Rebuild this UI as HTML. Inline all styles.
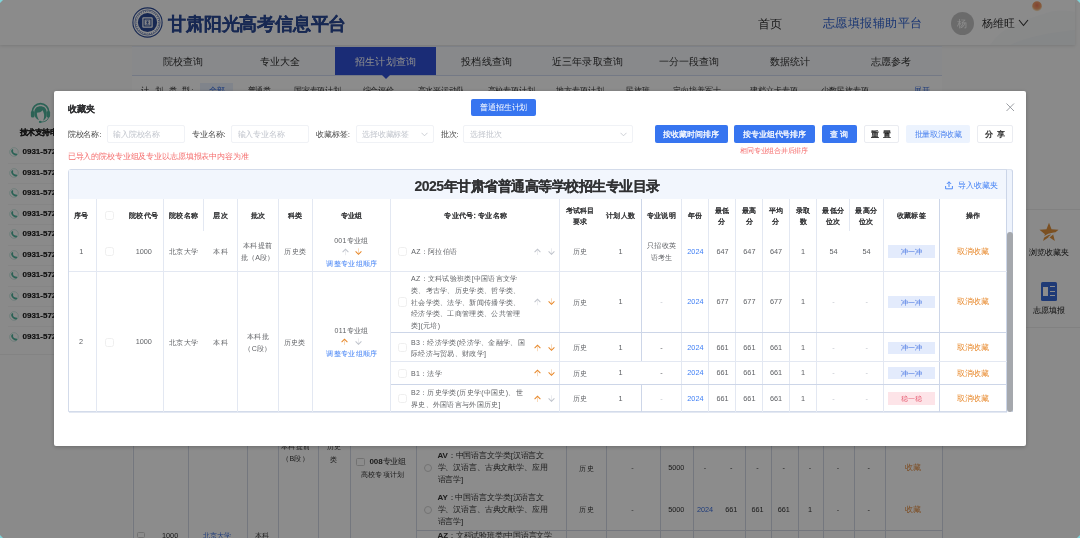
<!DOCTYPE html>
<html><head><meta charset="utf-8"><style>
html,body{margin:0;padding:0}
body{width:1080px;height:538px;overflow:hidden;position:relative;background:#fbfbfb;font-family:"Liberation Sans",sans-serif}
.a{position:absolute;white-space:nowrap}
</style></head><body>
<div id="root" style="position:absolute;left:0;top:0;width:1080px;height:538px;will-change:transform">
<div id="bg">
<div class="a" style="left:0.00px;top:0.00px;width:1075.00px;height:45.00px;background:#fdfdfe;box-shadow:0 1px 3px rgba(0,0,0,.12);"></div>
<svg class="a" style="left:990px;top:0" width="85" height="45" viewBox="0 0 85 45"><path d="M15 30 C30 22 45 16 60 12 C70 10 78 11 85 12 L85 45 L0 45 C5 38 10 33 15 30Z" fill="#eef1f4" opacity="0.35"/><path d="M20 45 C35 38 55 33 85 30 L85 45Z" fill="#e9edf1" opacity="0.3"/><defs><radialGradient id="sun" cx="0.5" cy="0.4" r="0.6"><stop offset="0" stop-color="#ee7a5a"/><stop offset="0.65" stop-color="#f3a46e"/><stop offset="1" stop-color="#f8d9a0" stop-opacity="0.5"/></radialGradient></defs><circle cx="47" cy="6.3" r="5" fill="url(#sun)"/></svg>
<svg class="a" style="left:132.3px;top:7.3px" width="31" height="31" viewBox="0 0 31 31"><circle cx="15.5" cy="15.5" r="14.6" fill="#fff" stroke="#2b4a96" stroke-width="1.1"/><circle cx="15.5" cy="15.5" r="12.6" fill="none" stroke="#2b4a96" stroke-width="0.6"/><circle cx="15.5" cy="15.5" r="11.3" fill="none" stroke="#2b4a96" stroke-width="1.1" stroke-dasharray="0.9 1.3" opacity="0.8"/><circle cx="15.5" cy="15.5" r="9.6" fill="#2b4a96"/><rect x="10.3" y="10.3" width="10.4" height="10.4" rx="1.2" fill="#fff"/><rect x="11.5" y="11.5" width="8" height="8" fill="#2b4a96"/><rect x="12.6" y="12.6" width="5.8" height="5.8" fill="#fff"/><path d="M13.6 13.9 H17.4 M15.5 13.9 V17.2 M13.6 17.2 H17.4 M14.2 15.5 H16.8" stroke="#2b4a96" stroke-width="0.7"/></svg>
<div class="a" style="top:15.03px;font-size:18px;line-height:18px;color:#2b4a96;letter-spacing:-0.200px;font-weight:700;-webkit-text-stroke:0.15px #2b4a96;left:168.30px;">甘肃阳光高考信息平台</div>
<div class="a" style="top:17.55px;font-size:12px;line-height:12px;color:#333;letter-spacing:-0.200px;left:758.00px;">首页</div>
<div class="a" style="top:17.25px;font-size:12px;line-height:12px;color:#2f62d0;letter-spacing:0.450px;left:823.00px;">志愿填报辅助平台</div>
<div class="a" style="left:950.5px;top:11.5px;width:23px;height:23px;border-radius:50%;background:#c4c4c4;color:#fff;font-size:10px;line-height:23px;text-align:center">杨</div>
<div class="a" style="top:17.98px;font-size:11px;line-height:11px;color:#333;letter-spacing:-0.100px;left:982.00px;">杨维旺</div>
<svg class="a" style="left:1018px;top:18.5px" width="11" height="8" viewBox="0 0 11 8"><path d="M1 1 L5.5 6.5 L10 1" fill="none" stroke="#333" stroke-width="1.1"/></svg>
<div class="a" style="left:132.00px;top:46.00px;width:810.00px;height:492.00px;background:#ffffff;"></div>
<div class="a" style="left:132.00px;top:46.00px;width:810.00px;height:29.00px;background:#f7f9fd;border-top:1px solid #e3e9f5;box-sizing:border-box;"></div>
<div class="a" style="left:132.00px;top:75.00px;width:810.00px;height:0.80px;background:#d3ddf2;"></div>
<div class="a" style="left:335.00px;top:47.00px;width:101.00px;height:28.00px;background:#3050d8;"></div>
<div class="a" style="left:381.5px;top:75px;width:0;height:0;border-left:4px solid transparent;border-right:4px solid transparent;border-top:4px solid #3050d8"></div>
<div class="a" style="top:57.45px;font-size:10px;line-height:10px;color:#333;letter-spacing:0.100px;left:122.95px;width:120px;text-align:center;">院校查询</div>
<div class="a" style="top:57.45px;font-size:10px;line-height:10px;color:#333;letter-spacing:0.100px;left:220.05px;width:120px;text-align:center;">专业大全</div>
<div class="a" style="top:57.45px;font-size:10px;line-height:10px;color:#fff;letter-spacing:0.100px;left:325.55px;width:120px;text-align:center;">招生计划查询</div>
<div class="a" style="top:57.45px;font-size:10px;line-height:10px;color:#333;letter-spacing:0.100px;left:426.65px;width:120px;text-align:center;">投档线查询</div>
<div class="a" style="top:57.45px;font-size:10px;line-height:10px;color:#333;letter-spacing:0.100px;left:527.55px;width:120px;text-align:center;">近三年录取查询</div>
<div class="a" style="top:57.45px;font-size:10px;line-height:10px;color:#333;letter-spacing:0.100px;left:629.05px;width:120px;text-align:center;">一分一段查询</div>
<div class="a" style="top:57.45px;font-size:10px;line-height:10px;color:#333;letter-spacing:0.100px;left:730.05px;width:120px;text-align:center;">数据统计</div>
<div class="a" style="top:57.45px;font-size:10px;line-height:10px;color:#333;letter-spacing:0.100px;left:831.25px;width:120px;text-align:center;">志愿参考</div>
<div class="a" style="left:200.00px;top:82.50px;width:33.00px;height:17.50px;background:#e9f0fd;"></div>
<div class="a" style="top:87.09px;font-size:8px;line-height:8px;color:#333;letter-spacing:-0.100px;left:141.40px;letter-spacing:5.6px;">计划类型</div>
<div class="a" style="top:86.69px;font-size:7.9px;line-height:7.9px;color:#333;left:191.20px;">:</div>
<div class="a" style="top:87.09px;font-size:8px;line-height:8px;color:#3b6fe0;letter-spacing:-0.100px;left:208.75px;">全部</div>
<div class="a" style="top:87.09px;font-size:8px;line-height:8px;color:#333;letter-spacing:-0.100px;left:247.50px;">普通类</div>
<div class="a" style="top:87.09px;font-size:8px;line-height:8px;color:#333;letter-spacing:-0.100px;left:293.75px;">国家专项计划</div>
<div class="a" style="top:87.09px;font-size:8px;line-height:8px;color:#333;letter-spacing:-0.100px;left:362.50px;">综合评价</div>
<div class="a" style="top:87.09px;font-size:8px;line-height:8px;color:#333;letter-spacing:-0.100px;left:417.50px;">高水平运动队</div>
<div class="a" style="top:87.09px;font-size:8px;line-height:8px;color:#333;letter-spacing:-0.100px;left:487.50px;">高校专项计划</div>
<div class="a" style="top:87.09px;font-size:8px;line-height:8px;color:#333;letter-spacing:-0.100px;left:556.25px;">地方专项计划</div>
<div class="a" style="top:87.09px;font-size:8px;line-height:8px;color:#333;letter-spacing:-0.100px;left:626.25px;">民族班</div>
<div class="a" style="top:87.09px;font-size:8px;line-height:8px;color:#333;letter-spacing:-0.100px;left:673.00px;">定向培养军士</div>
<div class="a" style="top:87.09px;font-size:8px;line-height:8px;color:#333;letter-spacing:-0.100px;left:750.00px;">建档立卡专项</div>
<div class="a" style="top:87.09px;font-size:8px;line-height:8px;color:#333;letter-spacing:-0.100px;left:821.25px;">少数民族专项</div>
<div class="a" style="top:87.09px;font-size:8px;line-height:8px;color:#3b6fe0;letter-spacing:-0.100px;left:913.75px;">展开</div>
<div class="a" style="left:0.00px;top:93.30px;width:132.00px;height:444.70px;background:#fcfcfc;"></div>
<svg class="a" style="left:30px;top:102px" width="21" height="21" viewBox="0 0 21 21"><path d="M2.3 10 A8.2 8.2 0 0 1 18.7 10" fill="none" stroke="#4fb39c" stroke-width="1.9"/><path d="M3.6 9.6 A6.9 6.9 0 0 1 17.4 9.6" fill="none" stroke="#fcfcfc" stroke-width="0.45" opacity="0.8"/><path d="M4.3 10.5 C4.3 6.2 7 4.2 10.5 4.2 C14 4.2 16.7 6.2 16.7 10.5 L16.5 14 C16 16.5 14.5 18 13 18.8 C13.8 17 14.3 15 14.1 12.5 C13.5 10.5 13.2 9.5 12.8 8.3 C11.5 10 9 10.8 6.9 10.8 C6.8 13.5 7.5 16 9 18 C6.5 17.2 4.8 15 4.4 13Z" fill="#4fb39c"/><rect x="0.9" y="9" width="3.6" height="6.6" rx="1.6" fill="#4fb39c"/><rect x="16.5" y="9" width="3.6" height="6.6" rx="1.6" fill="#4fb39c"/><path d="M18.6 15 C18 18.5 15 20 10.5 20" fill="none" stroke="#4fb39c" stroke-width="0.9"/><ellipse cx="10.2" cy="19.9" rx="1.4" ry="1.1" fill="#4fb39c"/></svg>
<div class="a" style="top:129.33px;font-size:8px;line-height:8px;color:#222;letter-spacing:-0.400px;font-weight:700;-webkit-text-stroke:0.15px #222;left:19.50px;">技术支持电话</div>
<svg class="a" style="left:9px;top:147.30px" width="10" height="10" viewBox="0 0 10 10"><circle cx="5" cy="5" r="4.3" fill="none" stroke="#4fb39c" stroke-width="0.5" opacity="0.55"/><path d="M3.4 1.9 C2.1 2.6 1.9 4.2 2.6 5.6 C3.3 7 4.6 8.1 6.2 8.4 C7.2 8.5 8 8 8.3 7.4 L7.1 6.2 C6.6 6.6 5.8 6.6 5.2 6.1 C4.4 5.5 4 4.7 4 3.9 C4 3.5 4.2 3.2 4.5 3Z" fill="#4fb39c"/></svg>
<div class="a" style="top:148.34px;font-size:8.0px;line-height:8.0px;color:#1a1a1a;font-weight:700;-webkit-text-stroke:0.15px #1a1a1a;left:22.50px;">0931-5728888</div>
<div class="a" style="left:8.00px;top:162.70px;width:124.00px;height:0.40px;background:#f3f3f3;"></div>
<svg class="a" style="left:9px;top:167.77px" width="10" height="10" viewBox="0 0 10 10"><circle cx="5" cy="5" r="4.3" fill="none" stroke="#4fb39c" stroke-width="0.5" opacity="0.55"/><path d="M3.4 1.9 C2.1 2.6 1.9 4.2 2.6 5.6 C3.3 7 4.6 8.1 6.2 8.4 C7.2 8.5 8 8 8.3 7.4 L7.1 6.2 C6.6 6.6 5.8 6.6 5.2 6.1 C4.4 5.5 4 4.7 4 3.9 C4 3.5 4.2 3.2 4.5 3Z" fill="#4fb39c"/></svg>
<div class="a" style="top:168.81px;font-size:8.0px;line-height:8.0px;color:#1a1a1a;font-weight:700;-webkit-text-stroke:0.15px #1a1a1a;left:22.50px;">0931-5728888</div>
<div class="a" style="left:8.00px;top:183.17px;width:124.00px;height:0.40px;background:#f3f3f3;"></div>
<svg class="a" style="left:9px;top:188.24px" width="10" height="10" viewBox="0 0 10 10"><circle cx="5" cy="5" r="4.3" fill="none" stroke="#4fb39c" stroke-width="0.5" opacity="0.55"/><path d="M3.4 1.9 C2.1 2.6 1.9 4.2 2.6 5.6 C3.3 7 4.6 8.1 6.2 8.4 C7.2 8.5 8 8 8.3 7.4 L7.1 6.2 C6.6 6.6 5.8 6.6 5.2 6.1 C4.4 5.5 4 4.7 4 3.9 C4 3.5 4.2 3.2 4.5 3Z" fill="#4fb39c"/></svg>
<div class="a" style="top:189.28px;font-size:8.0px;line-height:8.0px;color:#1a1a1a;font-weight:700;-webkit-text-stroke:0.15px #1a1a1a;left:22.50px;">0931-5728888</div>
<div class="a" style="left:8.00px;top:203.64px;width:124.00px;height:0.40px;background:#f3f3f3;"></div>
<svg class="a" style="left:9px;top:208.71px" width="10" height="10" viewBox="0 0 10 10"><circle cx="5" cy="5" r="4.3" fill="none" stroke="#4fb39c" stroke-width="0.5" opacity="0.55"/><path d="M3.4 1.9 C2.1 2.6 1.9 4.2 2.6 5.6 C3.3 7 4.6 8.1 6.2 8.4 C7.2 8.5 8 8 8.3 7.4 L7.1 6.2 C6.6 6.6 5.8 6.6 5.2 6.1 C4.4 5.5 4 4.7 4 3.9 C4 3.5 4.2 3.2 4.5 3Z" fill="#4fb39c"/></svg>
<div class="a" style="top:209.75px;font-size:8.0px;line-height:8.0px;color:#1a1a1a;font-weight:700;-webkit-text-stroke:0.15px #1a1a1a;left:22.50px;">0931-5728888</div>
<div class="a" style="left:8.00px;top:224.11px;width:124.00px;height:0.40px;background:#f3f3f3;"></div>
<svg class="a" style="left:9px;top:229.18px" width="10" height="10" viewBox="0 0 10 10"><circle cx="5" cy="5" r="4.3" fill="none" stroke="#4fb39c" stroke-width="0.5" opacity="0.55"/><path d="M3.4 1.9 C2.1 2.6 1.9 4.2 2.6 5.6 C3.3 7 4.6 8.1 6.2 8.4 C7.2 8.5 8 8 8.3 7.4 L7.1 6.2 C6.6 6.6 5.8 6.6 5.2 6.1 C4.4 5.5 4 4.7 4 3.9 C4 3.5 4.2 3.2 4.5 3Z" fill="#4fb39c"/></svg>
<div class="a" style="top:230.22px;font-size:8.0px;line-height:8.0px;color:#1a1a1a;font-weight:700;-webkit-text-stroke:0.15px #1a1a1a;left:22.50px;">0931-5728888</div>
<div class="a" style="left:8.00px;top:244.58px;width:124.00px;height:0.40px;background:#f3f3f3;"></div>
<svg class="a" style="left:9px;top:249.65px" width="10" height="10" viewBox="0 0 10 10"><circle cx="5" cy="5" r="4.3" fill="none" stroke="#4fb39c" stroke-width="0.5" opacity="0.55"/><path d="M3.4 1.9 C2.1 2.6 1.9 4.2 2.6 5.6 C3.3 7 4.6 8.1 6.2 8.4 C7.2 8.5 8 8 8.3 7.4 L7.1 6.2 C6.6 6.6 5.8 6.6 5.2 6.1 C4.4 5.5 4 4.7 4 3.9 C4 3.5 4.2 3.2 4.5 3Z" fill="#4fb39c"/></svg>
<div class="a" style="top:250.69px;font-size:8.0px;line-height:8.0px;color:#1a1a1a;font-weight:700;-webkit-text-stroke:0.15px #1a1a1a;left:22.50px;">0931-5728888</div>
<div class="a" style="left:8.00px;top:265.05px;width:124.00px;height:0.40px;background:#f3f3f3;"></div>
<svg class="a" style="left:9px;top:270.12px" width="10" height="10" viewBox="0 0 10 10"><circle cx="5" cy="5" r="4.3" fill="none" stroke="#4fb39c" stroke-width="0.5" opacity="0.55"/><path d="M3.4 1.9 C2.1 2.6 1.9 4.2 2.6 5.6 C3.3 7 4.6 8.1 6.2 8.4 C7.2 8.5 8 8 8.3 7.4 L7.1 6.2 C6.6 6.6 5.8 6.6 5.2 6.1 C4.4 5.5 4 4.7 4 3.9 C4 3.5 4.2 3.2 4.5 3Z" fill="#4fb39c"/></svg>
<div class="a" style="top:271.16px;font-size:8.0px;line-height:8.0px;color:#1a1a1a;font-weight:700;-webkit-text-stroke:0.15px #1a1a1a;left:22.50px;">0931-5728888</div>
<div class="a" style="left:8.00px;top:285.52px;width:124.00px;height:0.40px;background:#f3f3f3;"></div>
<svg class="a" style="left:9px;top:290.59px" width="10" height="10" viewBox="0 0 10 10"><circle cx="5" cy="5" r="4.3" fill="none" stroke="#4fb39c" stroke-width="0.5" opacity="0.55"/><path d="M3.4 1.9 C2.1 2.6 1.9 4.2 2.6 5.6 C3.3 7 4.6 8.1 6.2 8.4 C7.2 8.5 8 8 8.3 7.4 L7.1 6.2 C6.6 6.6 5.8 6.6 5.2 6.1 C4.4 5.5 4 4.7 4 3.9 C4 3.5 4.2 3.2 4.5 3Z" fill="#4fb39c"/></svg>
<div class="a" style="top:291.63px;font-size:8.0px;line-height:8.0px;color:#1a1a1a;font-weight:700;-webkit-text-stroke:0.15px #1a1a1a;left:22.50px;">0931-5728888</div>
<div class="a" style="left:8.00px;top:305.99px;width:124.00px;height:0.40px;background:#f3f3f3;"></div>
<svg class="a" style="left:9px;top:311.06px" width="10" height="10" viewBox="0 0 10 10"><circle cx="5" cy="5" r="4.3" fill="none" stroke="#4fb39c" stroke-width="0.5" opacity="0.55"/><path d="M3.4 1.9 C2.1 2.6 1.9 4.2 2.6 5.6 C3.3 7 4.6 8.1 6.2 8.4 C7.2 8.5 8 8 8.3 7.4 L7.1 6.2 C6.6 6.6 5.8 6.6 5.2 6.1 C4.4 5.5 4 4.7 4 3.9 C4 3.5 4.2 3.2 4.5 3Z" fill="#4fb39c"/></svg>
<div class="a" style="top:312.10px;font-size:8.0px;line-height:8.0px;color:#1a1a1a;font-weight:700;-webkit-text-stroke:0.15px #1a1a1a;left:22.50px;">0931-5728888</div>
<div class="a" style="left:8.00px;top:326.46px;width:124.00px;height:0.40px;background:#f3f3f3;"></div>
<svg class="a" style="left:9px;top:331.53px" width="10" height="10" viewBox="0 0 10 10"><circle cx="5" cy="5" r="4.3" fill="none" stroke="#4fb39c" stroke-width="0.5" opacity="0.55"/><path d="M3.4 1.9 C2.1 2.6 1.9 4.2 2.6 5.6 C3.3 7 4.6 8.1 6.2 8.4 C7.2 8.5 8 8 8.3 7.4 L7.1 6.2 C6.6 6.6 5.8 6.6 5.2 6.1 C4.4 5.5 4 4.7 4 3.9 C4 3.5 4.2 3.2 4.5 3Z" fill="#4fb39c"/></svg>
<div class="a" style="top:332.57px;font-size:8.0px;line-height:8.0px;color:#1a1a1a;font-weight:700;-webkit-text-stroke:0.15px #1a1a1a;left:22.50px;">0931-5728888</div>
<div class="a" style="left:0.00px;top:354.30px;width:132.00px;height:0.50px;background:#eeeeee;"></div>
<div class="a" style="left:1026.00px;top:209.00px;width:54.00px;height:1.00px;background:#ececec;"></div>
<div class="a" style="left:1026.00px;top:327.00px;width:54.00px;height:1.00px;background:#ececec;"></div>
<svg class="a" style="left:1039.3px;top:221.5px" width="20" height="21" viewBox="0 0 20 21"><path d="M10.00 0.80 L12.53 7.32 L19.51 7.71 L14.09 12.13 L15.88 18.89 L10.00 15.10 L4.12 18.89 L5.91 12.13 L0.49 7.71 L7.47 7.32Z" fill="#e0923e"/><path d="M4.5 15.2 C8 12.5 11.5 11.5 14.8 11.2 L9.6 15.6" fill="none" stroke="#fcfcfc" stroke-width="1.3"/></svg>
<div class="a" style="top:248.69px;font-size:8px;line-height:8px;color:#111;letter-spacing:-0.100px;left:1019.25px;width:60px;text-align:center;">浏览收藏夹</div>
<div class="a" style="left:1041px;top:282px;width:16px;height:19px;background:#3a6ad8;border-radius:1.5px"></div>
<div class="a" style="left:1043.2px;top:287px;width:5px;height:9px;background:#fff"></div>
<div class="a" style="left:1050px;top:286px;width:4.5px;height:1.2px;background:#fff"></div>
<div class="a" style="left:1050px;top:290.5px;width:4.5px;height:1.2px;background:#fff"></div>
<div class="a" style="left:1050px;top:295px;width:4.5px;height:1.2px;background:#fff"></div>
<div class="a" style="top:307.19px;font-size:8px;line-height:8px;color:#111;letter-spacing:-0.100px;left:1019.25px;width:60px;text-align:center;">志愿填报</div>
<div class="a" style="left:133.00px;top:430.00px;width:0.80px;height:108.00px;background:#d3d9e6;"></div>
<div class="a" style="left:187.50px;top:430.00px;width:0.80px;height:108.00px;background:#d3d9e6;"></div>
<div class="a" style="left:246.50px;top:430.00px;width:0.80px;height:108.00px;background:#d3d9e6;"></div>
<div class="a" style="left:277.50px;top:430.00px;width:0.80px;height:108.00px;background:#d3d9e6;"></div>
<div class="a" style="left:318.00px;top:430.00px;width:0.80px;height:108.00px;background:#d3d9e6;"></div>
<div class="a" style="left:349.50px;top:430.00px;width:0.80px;height:108.00px;background:#d3d9e6;"></div>
<div class="a" style="left:416.25px;top:430.00px;width:0.80px;height:108.00px;background:#d3d9e6;"></div>
<div class="a" style="left:566.25px;top:430.00px;width:0.80px;height:108.00px;background:#d3d9e6;"></div>
<div class="a" style="left:606.25px;top:430.00px;width:0.80px;height:108.00px;background:#d3d9e6;"></div>
<div class="a" style="left:659.50px;top:430.00px;width:0.80px;height:108.00px;background:#d3d9e6;"></div>
<div class="a" style="left:693.00px;top:430.00px;width:0.80px;height:108.00px;background:#d3d9e6;"></div>
<div class="a" style="left:745.00px;top:430.00px;width:0.80px;height:108.00px;background:#d3d9e6;"></div>
<div class="a" style="left:771.25px;top:430.00px;width:0.80px;height:108.00px;background:#d3d9e6;"></div>
<div class="a" style="left:797.50px;top:430.00px;width:0.80px;height:108.00px;background:#d3d9e6;"></div>
<div class="a" style="left:822.50px;top:430.00px;width:0.80px;height:108.00px;background:#d3d9e6;"></div>
<div class="a" style="left:853.75px;top:430.00px;width:0.80px;height:108.00px;background:#d3d9e6;"></div>
<div class="a" style="left:885.00px;top:430.00px;width:0.80px;height:108.00px;background:#d3d9e6;"></div>
<div class="a" style="left:941.75px;top:430.00px;width:0.80px;height:108.00px;background:#d3d9e6;"></div>
<div class="a" style="left:416.25px;top:530.00px;width:525.50px;height:1.00px;background:#d3d9e6;"></div>
<div class="a" style="top:443.07px;font-size:7px;line-height:7px;color:#333;letter-spacing:0.300px;left:265.65px;width:60px;text-align:center;">本科提前</div>
<div class="a" style="top:455.07px;font-size:7px;line-height:7px;color:#333;letter-spacing:0.300px;left:265.65px;width:60px;text-align:center;">（B段）</div>
<div class="a" style="top:443.07px;font-size:7px;line-height:7px;color:#333;letter-spacing:0.300px;left:313.85px;width:40px;text-align:center;">历史</div>
<div class="a" style="top:456.07px;font-size:7px;line-height:7px;color:#333;letter-spacing:0.300px;left:313.85px;width:40px;text-align:center;">类</div>
<div class="a" style="left:356.00px;top:458.00px;width:8.50px;height:8.00px;border:1px solid #d0d0d0;border-radius:1.5px;box-sizing:border-box;background:#fff;"></div>
<div class="a" style="top:458.29px;font-size:8px;line-height:8px;color:#333;letter-spacing:-0.100px;left:369.50px;"><b>008</b>专业组</div>
<div class="a" style="top:470.57px;font-size:7px;line-height:7px;color:#333;letter-spacing:0.300px;left:342.65px;width:80px;text-align:center;">高校专项计划</div>
<div class="a" style="top:451.81px;font-size:8px;line-height:8px;color:#333;letter-spacing:-0.140px;left:437.50px;"><b>AV</b>：中国语言文学类[汉语言文</div>
<div class="a" style="top:463.81px;font-size:8px;line-height:8px;color:#333;letter-spacing:-0.140px;left:437.50px;">学、汉语言、古典文献学、应用</div>
<div class="a" style="top:476.31px;font-size:8px;line-height:8px;color:#333;letter-spacing:-0.140px;left:437.50px;">语言学]</div>
<div class="a" style="top:493.81px;font-size:8px;line-height:8px;color:#333;letter-spacing:-0.140px;left:437.50px;"><b>AY</b>：中国语言文学类[汉语言文</div>
<div class="a" style="top:505.61px;font-size:8px;line-height:8px;color:#333;letter-spacing:-0.140px;left:437.50px;">学、汉语言、古典文献学、应用</div>
<div class="a" style="top:517.61px;font-size:8px;line-height:8px;color:#333;letter-spacing:-0.140px;left:437.50px;">语言学]</div>
<div class="a" style="top:532.31px;font-size:8px;line-height:8px;color:#333;letter-spacing:-0.140px;left:437.50px;"><b>AZ</b>：文科试验班类[中国语言文学</div>
<div class="a" style="left:424.00px;top:464.00px;width:8.00px;height:8.00px;border:1px solid #d0d0d0;border-radius:50%;box-sizing:border-box;background:#fff;"></div>
<div class="a" style="left:424.00px;top:506.00px;width:8.00px;height:8.00px;border:1px solid #d0d0d0;border-radius:50%;box-sizing:border-box;background:#fff;"></div>
<div class="a" style="top:464.57px;font-size:7px;line-height:7px;color:#333;letter-spacing:0.300px;left:566.65px;width:40px;text-align:center;">历史</div>
<div class="a" style="top:506.07px;font-size:7px;line-height:7px;color:#333;letter-spacing:0.300px;left:566.65px;width:40px;text-align:center;">历史</div>
<div class="a" style="top:464.20px;font-size:7.3px;line-height:7.3px;color:#555;left:617.50px;width:30px;text-align:center;">-</div>
<div class="a" style="top:464.20px;font-size:7.3px;line-height:7.3px;color:#333;left:656.25px;width:40px;text-align:center;">5000</div>
<div class="a" style="top:505.70px;font-size:7.3px;line-height:7.3px;color:#555;left:617.50px;width:30px;text-align:center;">-</div>
<div class="a" style="top:505.70px;font-size:7.3px;line-height:7.3px;color:#333;left:656.25px;width:40px;text-align:center;">5000</div>
<div class="a" style="top:464.20px;font-size:7.3px;line-height:7.3px;color:#333;left:690.00px;width:30px;text-align:center;">-</div>
<div class="a" style="top:464.20px;font-size:7.3px;line-height:7.3px;color:#333;left:716.25px;width:30px;text-align:center;">-</div>
<div class="a" style="top:464.20px;font-size:7.3px;line-height:7.3px;color:#333;left:742.50px;width:30px;text-align:center;">-</div>
<div class="a" style="top:464.20px;font-size:7.3px;line-height:7.3px;color:#333;left:768.75px;width:30px;text-align:center;">-</div>
<div class="a" style="top:464.20px;font-size:7.3px;line-height:7.3px;color:#333;left:795.00px;width:30px;text-align:center;">-</div>
<div class="a" style="top:464.20px;font-size:7.3px;line-height:7.3px;color:#333;left:823.00px;width:30px;text-align:center;">-</div>
<div class="a" style="top:464.20px;font-size:7.3px;line-height:7.3px;color:#333;left:853.75px;width:30px;text-align:center;">-</div>
<div class="a" style="top:505.70px;font-size:7.3px;line-height:7.3px;color:#3b6fe0;left:690.00px;width:30px;text-align:center;">2024</div>
<div class="a" style="top:505.70px;font-size:7.3px;line-height:7.3px;color:#333;left:716.25px;width:30px;text-align:center;">661</div>
<div class="a" style="top:505.70px;font-size:7.3px;line-height:7.3px;color:#333;left:742.50px;width:30px;text-align:center;">661</div>
<div class="a" style="top:505.70px;font-size:7.3px;line-height:7.3px;color:#333;left:768.75px;width:30px;text-align:center;">661</div>
<div class="a" style="top:505.70px;font-size:7.3px;line-height:7.3px;color:#333;left:795.00px;width:30px;text-align:center;">1</div>
<div class="a" style="top:505.70px;font-size:7.3px;line-height:7.3px;color:#333;left:823.00px;width:30px;text-align:center;">-</div>
<div class="a" style="top:505.70px;font-size:7.3px;line-height:7.3px;color:#333;left:853.75px;width:30px;text-align:center;">-</div>
<div class="a" style="top:464.29px;font-size:8px;line-height:8px;color:#e3893a;letter-spacing:-0.100px;left:892.95px;width:40px;text-align:center;">收藏</div>
<div class="a" style="top:505.79px;font-size:8px;line-height:8px;color:#e3893a;letter-spacing:-0.100px;left:892.95px;width:40px;text-align:center;">收藏</div>
<div class="a" style="top:531.70px;font-size:7.3px;line-height:7.3px;color:#333;left:162.00px;">1000</div>
<div class="a" style="top:532.07px;font-size:7px;line-height:7px;color:#3b6fe0;letter-spacing:0.300px;left:202.50px;">北京大学</div>
<div class="a" style="top:532.07px;font-size:7px;line-height:7px;color:#333;letter-spacing:0.300px;left:254.50px;">本科</div>
<div class="a" style="left:137.00px;top:532.00px;width:8.00px;height:6.00px;border:1px solid #d0d0d0;border-radius:1.5px;box-sizing:border-box;background:#fff;"></div>
</div>
<div class="a" style="left:0;top:0;width:1080px;height:538px;background:rgba(0,0,0,0.45)"></div>
<div class="a" style="left:0;top:0;width:0;height:0;border-top:3.5px solid #7fd4d9;border-right:3.5px solid transparent"></div>
<div class="a" style="left:1076.5px;top:0;width:0;height:0;border-top:3.5px solid #7fd4d9;border-left:3.5px solid transparent"></div>
<div class="a" style="left:0;top:534.5px;width:0;height:0;border-bottom:3.5px solid #7fd4d9;border-right:3.5px solid transparent"></div>
<div class="a" style="left:1076.5px;top:534.5px;width:0;height:0;border-bottom:3.5px solid #7fd4d9;border-left:3.5px solid transparent"></div>
<div class="a" style="left:54.00px;top:91.00px;width:972.00px;height:355.30px;background:#fff;border-radius:2px;box-shadow:0 1px 4px rgba(0,0,0,.25);"></div>
<div class="a" style="top:105.37px;font-size:9px;line-height:9px;color:#303133;font-weight:700;-webkit-text-stroke:0.15px #303133;left:67.60px;">收藏夹</div>
<svg class="a" style="left:1006px;top:102.5px" width="8.5" height="8.5" viewBox="0 0 8.5 8.5"><path d="M0.5 0.5 L8 8 M8 0.5 L0.5 8" stroke="#909399" stroke-width="0.9"/></svg>
<div class="a" style="left:471.25px;top:99.25px;width:65.00px;height:16.50px;background:#3775f0;border-radius:2px;"></div>
<div class="a" style="top:103.79px;font-size:8px;line-height:8px;color:#fff;letter-spacing:-0.100px;left:463.70px;width:80px;text-align:center;">普通招生计划</div>
<div class="a" style="top:130.61px;font-size:8px;line-height:8px;color:#454545;letter-spacing:-0.140px;left:67.75px;">院校名称:</div>
<div class="a" style="left:106.50px;top:125.00px;width:78.25px;height:18.00px;border:1px solid #f0f2f6;border-radius:2px;box-sizing:border-box;"></div>
<div class="a" style="top:130.61px;font-size:8px;line-height:8px;color:#c0c4cc;letter-spacing:-0.140px;left:113.00px;">输入院校名称</div>
<div class="a" style="top:130.61px;font-size:8px;line-height:8px;color:#454545;letter-spacing:-0.140px;left:192.00px;">专业名称:</div>
<div class="a" style="left:231.00px;top:125.00px;width:78.00px;height:18.00px;border:1px solid #f0f2f6;border-radius:2px;box-sizing:border-box;"></div>
<div class="a" style="top:130.61px;font-size:8px;line-height:8px;color:#c0c4cc;letter-spacing:-0.140px;left:237.50px;">输入专业名称</div>
<div class="a" style="top:130.61px;font-size:8px;line-height:8px;color:#454545;letter-spacing:-0.140px;left:316.25px;">收藏标签:</div>
<div class="a" style="left:355.50px;top:125.00px;width:78.25px;height:18.00px;border:1px solid #f0f2f6;border-radius:2px;box-sizing:border-box;"></div>
<div class="a" style="top:130.61px;font-size:8px;line-height:8px;color:#c0c4cc;letter-spacing:-0.140px;left:362.00px;">选择收藏标签</div>
<svg class="a" style="left:421px;top:131.5px" width="7" height="5" viewBox="0 0 7 5"><path d="M0.5 0.8 L3.5 3.8 L6.5 0.8" fill="none" stroke="#c0c4cc" stroke-width="0.8"/></svg>
<div class="a" style="top:130.61px;font-size:8px;line-height:8px;color:#454545;letter-spacing:-0.140px;left:440.75px;">批次:</div>
<div class="a" style="left:463.25px;top:125.00px;width:169.25px;height:18.00px;border:1px solid #f0f2f6;border-radius:2px;box-sizing:border-box;"></div>
<div class="a" style="top:130.61px;font-size:8px;line-height:8px;color:#c0c4cc;letter-spacing:-0.140px;left:470.00px;">选择批次</div>
<svg class="a" style="left:619.5px;top:131.5px" width="7" height="5" viewBox="0 0 7 5"><path d="M0.5 0.8 L3.5 3.8 L6.5 0.8" fill="none" stroke="#c0c4cc" stroke-width="0.8"/></svg>
<div class="a" style="left:654.50px;top:125.00px;width:73.00px;height:18.00px;background:#3775f0;border-radius:2px;"></div>
<div class="a" style="top:130.61px;font-size:8px;line-height:8px;color:#fff;letter-spacing:-0.140px;left:654.43px;width:73.0px;text-align:center;-webkit-text-stroke:0.25px #fff;">按收藏时间排序</div>
<div class="a" style="left:734.25px;top:125.00px;width:80.75px;height:18.00px;background:#3775f0;border-radius:2px;"></div>
<div class="a" style="top:130.61px;font-size:8px;line-height:8px;color:#fff;letter-spacing:-0.140px;left:734.18px;width:80.75px;text-align:center;-webkit-text-stroke:0.25px #fff;">按专业组代号排序</div>
<div class="a" style="top:147.08px;font-size:7px;line-height:7px;color:#f56c6c;letter-spacing:-0.250px;left:724.12px;width:100px;text-align:center;">相同专业组合并后排序</div>
<div class="a" style="left:821.60px;top:125.00px;width:35.30px;height:18.00px;background:#3775f0;border-radius:2px;"></div>
<div class="a" style="top:130.61px;font-size:8px;line-height:8px;color:#fff;letter-spacing:-0.140px;left:821.53px;width:35.299999999999955px;text-align:center;-webkit-text-stroke:0.25px #fff;">查&nbsp;询</div>
<div class="a" style="left:864.00px;top:125.00px;width:34.60px;height:18.00px;background:#fff;border:1px solid #eaecf1;border-radius:2px;box-sizing:border-box;"></div>
<div class="a" style="top:130.61px;font-size:8px;line-height:8px;color:#222;letter-spacing:-0.140px;left:863.93px;width:34.60000000000002px;text-align:center;-webkit-text-stroke:0.3px #222;">重&nbsp;&nbsp;置</div>
<div class="a" style="left:906.10px;top:125.00px;width:64.40px;height:18.00px;background:#ecf3fe;border-radius:2px;"></div>
<div class="a" style="top:130.61px;font-size:8px;line-height:8px;color:#4a82ef;letter-spacing:-0.140px;left:906.03px;width:64.39999999999998px;text-align:center;">批量取消收藏</div>
<div class="a" style="left:977.40px;top:125.00px;width:35.30px;height:18.00px;background:#fff;border:1px solid #eaecf1;border-radius:2px;box-sizing:border-box;"></div>
<div class="a" style="top:130.61px;font-size:8px;line-height:8px;color:#222;letter-spacing:-0.140px;left:977.33px;width:35.30000000000007px;text-align:center;-webkit-text-stroke:0.3px #222;">分&nbsp;&nbsp;享</div>
<div class="a" style="top:152.61px;font-size:8px;line-height:8px;color:#f56c6c;letter-spacing:-0.140px;left:67.75px;">已导入的院校专业组及专业以志愿填报表中内容为准</div>
<div class="a" style="left:67.50px;top:168.70px;width:945.00px;height:243.60px;border:1px solid #d3dbea;border-radius:3px 3px 0 0;box-sizing:border-box;"></div>
<div class="a" style="left:68.50px;top:169.70px;width:938.20px;height:29.70px;background:#f2f6fd;"></div>
<div class="a" style="top:178.66px;font-size:14px;line-height:14px;color:#303133;letter-spacing:-0.500px;font-weight:700;-webkit-text-stroke:0.15px #303133;left:337.00px;width:400px;text-align:center;">2025年甘肃省普通高等学校招生专业目录</div>
<svg class="a" style="left:945px;top:181px" width="8" height="8.5" viewBox="0 0 8 8.5"><path d="M4 6 V0.8 M1.8 3 L4 0.8 L6.2 3 M0.6 5 V7.8 H7.4 V5" fill="none" stroke="#3f7ff5" stroke-width="0.9"/></svg>
<div class="a" style="top:181.59px;font-size:8px;line-height:8px;color:#3f7ff5;letter-spacing:-0.100px;left:958.00px;">导入收藏夹</div>
<div class="a" style="left:1006.30px;top:168.70px;width:6.30px;height:243.60px;background:#eef3fc;border-left:1px solid #cbd5e8;border-right:1px solid #cbd5e8;border-top:1px solid #dfe5f0;border-radius:0 3px 0 0;box-sizing:border-box;"></div>
<div class="a" style="left:1007.30px;top:232.00px;width:5.30px;height:180.30px;background:#a5a8ad;border-radius:3px;"></div>
<div class="a" style="left:95.60px;top:199.40px;width:0.80px;height:212.60px;background:#e3e8f2;"></div>
<div class="a" style="left:162.80px;top:199.40px;width:0.80px;height:212.60px;background:#e3e8f2;"></div>
<div class="a" style="left:237.10px;top:199.40px;width:0.80px;height:212.60px;background:#e3e8f2;"></div>
<div class="a" style="left:278.10px;top:199.40px;width:0.80px;height:212.60px;background:#e3e8f2;"></div>
<div class="a" style="left:312.10px;top:199.40px;width:0.80px;height:212.60px;background:#e3e8f2;"></div>
<div class="a" style="left:390.10px;top:199.40px;width:0.80px;height:212.60px;background:#e3e8f2;"></div>
<div class="a" style="left:559.10px;top:199.40px;width:0.80px;height:212.60px;background:#e3e8f2;"></div>
<div class="a" style="left:681.35px;top:199.40px;width:0.80px;height:212.60px;background:#e3e8f2;"></div>
<div class="a" style="left:708.35px;top:199.40px;width:0.80px;height:212.60px;background:#e3e8f2;"></div>
<div class="a" style="left:735.10px;top:199.40px;width:0.80px;height:212.60px;background:#e3e8f2;"></div>
<div class="a" style="left:762.10px;top:199.40px;width:0.80px;height:212.60px;background:#e3e8f2;"></div>
<div class="a" style="left:789.10px;top:199.40px;width:0.80px;height:212.60px;background:#e3e8f2;"></div>
<div class="a" style="left:815.85px;top:199.40px;width:0.80px;height:212.60px;background:#e3e8f2;"></div>
<div class="a" style="left:882.60px;top:199.40px;width:0.80px;height:212.60px;background:#e3e8f2;"></div>
<div class="a" style="left:938.90px;top:199.40px;width:0.80px;height:212.60px;background:#cdd6e8;"></div>
<div class="a" style="left:202.85px;top:199.40px;width:0.80px;height:31.60px;background:#e3e8f2;"></div>
<div class="a" style="left:849.20px;top:199.40px;width:0.80px;height:31.60px;background:#e3e8f2;"></div>
<div class="a" style="left:640.85px;top:199.40px;width:0.80px;height:162.10px;background:#cdd6e8;"></div>
<div class="a" style="left:640.85px;top:384.20px;width:0.80px;height:27.80px;background:#cdd6e8;"></div>
<div class="a" style="left:68.50px;top:270.60px;width:938.20px;height:0.80px;background:#e3e8f2;"></div>
<div class="a" style="left:390.50px;top:332.45px;width:616.20px;height:0.90px;background:#cdd6e8;"></div>
<div class="a" style="left:390.50px;top:361.05px;width:616.20px;height:0.90px;background:#e3e8f2;"></div>
<div class="a" style="left:390.50px;top:383.75px;width:616.20px;height:0.90px;background:#cdd6e8;"></div>
<div class="a" style="left:68.50px;top:411.60px;width:938.20px;height:0.80px;background:#e3e8f2;"></div>
<div class="a" style="top:212.37px;font-size:7px;line-height:7px;color:#303133;letter-spacing:0.300px;left:41.40px;width:80px;text-align:center;-webkit-text-stroke:0.35px #303133;">序号</div>
<div class="a" style="left:105.20px;top:210.60px;width:9.10px;height:9.30px;border:1px solid #efefef;border-radius:2.5px;box-sizing:border-box;"></div>
<div class="a" style="top:212.37px;font-size:7px;line-height:7px;color:#303133;letter-spacing:0.300px;left:103.55px;width:80px;text-align:center;-webkit-text-stroke:0.35px #303133;">院校代号</div>
<div class="a" style="top:212.37px;font-size:7px;line-height:7px;color:#303133;letter-spacing:0.300px;left:143.65px;width:80px;text-align:center;-webkit-text-stroke:0.35px #303133;">院校名称</div>
<div class="a" style="top:212.37px;font-size:7px;line-height:7px;color:#303133;letter-spacing:0.300px;left:180.65px;width:80px;text-align:center;-webkit-text-stroke:0.35px #303133;">层次</div>
<div class="a" style="top:212.37px;font-size:7px;line-height:7px;color:#303133;letter-spacing:0.300px;left:218.15px;width:80px;text-align:center;-webkit-text-stroke:0.35px #303133;">批次</div>
<div class="a" style="top:212.37px;font-size:7px;line-height:7px;color:#303133;letter-spacing:0.300px;left:255.15px;width:80px;text-align:center;-webkit-text-stroke:0.35px #303133;">科类</div>
<div class="a" style="top:212.37px;font-size:7px;line-height:7px;color:#303133;letter-spacing:0.300px;left:311.55px;width:80px;text-align:center;-webkit-text-stroke:0.35px #303133;">专业组</div>
<div class="a" style="top:212.37px;font-size:7px;line-height:7px;color:#303133;letter-spacing:0.300px;left:435.90px;width:80px;text-align:center;-webkit-text-stroke:0.35px #303133;">专业代号:&nbsp;专业名称</div>
<div class="a" style="top:206.97px;font-size:7px;line-height:7px;color:#303133;letter-spacing:0.300px;left:550.15px;width:60px;text-align:center;-webkit-text-stroke:0.35px #303133;">考试科目</div>
<div class="a" style="top:218.17px;font-size:7px;line-height:7px;color:#303133;letter-spacing:0.300px;left:550.15px;width:60px;text-align:center;-webkit-text-stroke:0.35px #303133;">要求</div>
<div class="a" style="top:212.37px;font-size:7px;line-height:7px;color:#303133;letter-spacing:0.300px;left:580.75px;width:80px;text-align:center;-webkit-text-stroke:0.35px #303133;">计划人数</div>
<div class="a" style="top:212.37px;font-size:7px;line-height:7px;color:#303133;letter-spacing:0.300px;left:621.25px;width:80px;text-align:center;-webkit-text-stroke:0.35px #303133;">专业说明</div>
<div class="a" style="top:212.37px;font-size:7px;line-height:7px;color:#303133;letter-spacing:0.300px;left:654.90px;width:80px;text-align:center;-webkit-text-stroke:0.35px #303133;">年份</div>
<div class="a" style="top:206.97px;font-size:7px;line-height:7px;color:#303133;letter-spacing:0.300px;left:692.05px;width:60px;text-align:center;-webkit-text-stroke:0.35px #303133;">最低</div>
<div class="a" style="top:218.17px;font-size:7px;line-height:7px;color:#303133;letter-spacing:0.300px;left:692.05px;width:60px;text-align:center;-webkit-text-stroke:0.35px #303133;">分</div>
<div class="a" style="top:206.97px;font-size:7px;line-height:7px;color:#303133;letter-spacing:0.300px;left:719.25px;width:60px;text-align:center;-webkit-text-stroke:0.35px #303133;">最高</div>
<div class="a" style="top:218.17px;font-size:7px;line-height:7px;color:#303133;letter-spacing:0.300px;left:719.25px;width:60px;text-align:center;-webkit-text-stroke:0.35px #303133;">分</div>
<div class="a" style="top:206.97px;font-size:7px;line-height:7px;color:#303133;letter-spacing:0.300px;left:746.15px;width:60px;text-align:center;-webkit-text-stroke:0.35px #303133;">平均</div>
<div class="a" style="top:218.17px;font-size:7px;line-height:7px;color:#303133;letter-spacing:0.300px;left:746.15px;width:60px;text-align:center;-webkit-text-stroke:0.35px #303133;">分</div>
<div class="a" style="top:206.97px;font-size:7px;line-height:7px;color:#303133;letter-spacing:0.300px;left:773.25px;width:60px;text-align:center;-webkit-text-stroke:0.35px #303133;">录取</div>
<div class="a" style="top:218.17px;font-size:7px;line-height:7px;color:#303133;letter-spacing:0.300px;left:773.25px;width:60px;text-align:center;-webkit-text-stroke:0.35px #303133;">数</div>
<div class="a" style="top:206.97px;font-size:7px;line-height:7px;color:#303133;letter-spacing:0.300px;left:803.25px;width:60px;text-align:center;-webkit-text-stroke:0.35px #303133;">最低分</div>
<div class="a" style="top:218.17px;font-size:7px;line-height:7px;color:#303133;letter-spacing:0.300px;left:803.25px;width:60px;text-align:center;-webkit-text-stroke:0.35px #303133;">位次</div>
<div class="a" style="top:206.97px;font-size:7px;line-height:7px;color:#303133;letter-spacing:0.300px;left:836.25px;width:60px;text-align:center;-webkit-text-stroke:0.35px #303133;">最高分</div>
<div class="a" style="top:218.17px;font-size:7px;line-height:7px;color:#303133;letter-spacing:0.300px;left:836.25px;width:60px;text-align:center;-webkit-text-stroke:0.35px #303133;">位次</div>
<div class="a" style="top:212.37px;font-size:7px;line-height:7px;color:#303133;letter-spacing:0.300px;left:871.25px;width:80px;text-align:center;-webkit-text-stroke:0.35px #303133;">收藏标签</div>
<div class="a" style="top:212.37px;font-size:7px;line-height:7px;color:#303133;letter-spacing:0.300px;left:933.25px;width:80px;text-align:center;-webkit-text-stroke:0.35px #303133;">操作</div>
<div class="a" style="top:247.70px;font-size:7.3px;line-height:7.3px;color:#606266;left:41.25px;width:80px;text-align:center;">1</div>
<div class="a" style="left:105.20px;top:246.90px;width:9.00px;height:9.20px;border:1px solid #efefef;border-radius:2.5px;box-sizing:border-box;"></div>
<div class="a" style="top:247.70px;font-size:7.3px;line-height:7.3px;color:#606266;left:103.75px;width:80px;text-align:center;">1000</div>
<div class="a" style="top:248.07px;font-size:7px;line-height:7px;color:#606266;letter-spacing:0.300px;left:143.55px;width:80px;text-align:center;">北京大学</div>
<div class="a" style="top:248.07px;font-size:7px;line-height:7px;color:#606266;letter-spacing:0.300px;left:180.75px;width:80px;text-align:center;">本科</div>
<div class="a" style="top:241.87px;font-size:7px;line-height:7px;color:#606266;letter-spacing:0.300px;left:217.65px;width:80px;text-align:center;">本科提前</div>
<div class="a" style="top:254.37px;font-size:7px;line-height:7px;color:#606266;letter-spacing:0.300px;left:217.65px;width:80px;text-align:center;">批（A段）</div>
<div class="a" style="top:248.07px;font-size:7px;line-height:7px;color:#606266;letter-spacing:0.300px;left:255.40px;width:80px;text-align:center;">历史类</div>
<div class="a" style="top:236.57px;font-size:7px;line-height:7px;color:#606266;letter-spacing:0.300px;left:311.40px;width:80px;text-align:center;">001专业组</div>
<svg class="a" style="left:341.50px;top:248.15px" width="7" height="7.5" viewBox="0 0 7 7.5"><path d="M3.5 1.2 V7.2" fill="none" stroke="#c0c4cc" stroke-width="0.7" opacity="0.45"/><path d="M0.6 4.1 L3.5 1.2 L6.4 4.1" fill="none" stroke="#c0c4cc" stroke-width="1.05"/></svg>
<svg class="a" style="left:354.50px;top:248.15px" width="7" height="7.5" viewBox="0 0 7 7.5"><path d="M3.5 0.3 V6.3" fill="none" stroke="#e8882a" stroke-width="0.7" opacity="0.45"/><path d="M0.6 3.4 L3.5 6.3 L6.4 3.4" fill="none" stroke="#e8882a" stroke-width="1.05"/></svg>
<div class="a" style="top:259.67px;font-size:7px;line-height:7px;color:#3f7ff5;letter-spacing:0.300px;left:312.05px;width:80px;text-align:center;">调整专业组顺序</div>
<div class="a" style="left:398.00px;top:246.90px;width:9.00px;height:9.20px;border:1px solid #efefef;border-radius:2.5px;box-sizing:border-box;"></div>
<div class="a" style="top:248.07px;font-size:7px;line-height:7px;color:#606266;letter-spacing:0.300px;left:411.25px;">AZ：阿拉伯语</div>
<svg class="a" style="left:534.40px;top:247.75px" width="7" height="7.5" viewBox="0 0 7 7.5"><path d="M3.5 1.2 V7.2" fill="none" stroke="#c0c4cc" stroke-width="0.7" opacity="0.45"/><path d="M0.6 4.1 L3.5 1.2 L6.4 4.1" fill="none" stroke="#c0c4cc" stroke-width="1.05"/></svg>
<svg class="a" style="left:548.00px;top:247.75px" width="7" height="7.5" viewBox="0 0 7 7.5"><path d="M3.5 0.3 V6.3" fill="none" stroke="#c0c4cc" stroke-width="0.7" opacity="0.45"/><path d="M0.6 3.4 L3.5 6.3 L6.4 3.4" fill="none" stroke="#c0c4cc" stroke-width="1.05"/></svg>
<div class="a" style="top:248.07px;font-size:7px;line-height:7px;color:#606266;letter-spacing:0.300px;left:540.15px;width:80px;text-align:center;">历史</div>
<div class="a" style="top:247.70px;font-size:7.3px;line-height:7.3px;color:#606266;left:580.60px;width:80px;text-align:center;">1</div>
<div class="a" style="top:242.47px;font-size:7px;line-height:7px;color:#606266;letter-spacing:0.300px;left:621.75px;width:80px;text-align:center;">只招收英</div>
<div class="a" style="top:254.07px;font-size:7px;line-height:7px;color:#606266;letter-spacing:0.300px;left:621.75px;width:80px;text-align:center;">语考生</div>
<div class="a" style="top:247.70px;font-size:7.3px;line-height:7.3px;color:#3f7ff5;left:655.40px;width:80px;text-align:center;">2024</div>
<div class="a" style="top:247.70px;font-size:7.3px;line-height:7.3px;color:#606266;left:682.50px;width:80px;text-align:center;">647</div>
<div class="a" style="top:247.70px;font-size:7.3px;line-height:7.3px;color:#606266;left:709.40px;width:80px;text-align:center;">647</div>
<div class="a" style="top:247.70px;font-size:7.3px;line-height:7.3px;color:#606266;left:736.00px;width:80px;text-align:center;">647</div>
<div class="a" style="top:247.70px;font-size:7.3px;line-height:7.3px;color:#606266;left:763.00px;width:80px;text-align:center;">1</div>
<div class="a" style="top:247.70px;font-size:7.3px;line-height:7.3px;color:#606266;left:793.50px;width:80px;text-align:center;">54</div>
<div class="a" style="top:247.70px;font-size:7.3px;line-height:7.3px;color:#606266;left:826.60px;width:80px;text-align:center;">54</div>
<div class="a" style="left:888.20px;top:245.20px;width:46.70px;height:12.60px;background:#e3ebfc;"></div>
<div class="a" style="top:248.07px;font-size:7px;line-height:7px;color:#3f6fe0;letter-spacing:0.300px;left:888.65px;width:46px;text-align:center;">冲一冲</div>
<div class="a" style="top:247.81px;font-size:8px;line-height:8px;color:#e8882a;letter-spacing:-0.140px;left:942.93px;width:60px;text-align:center;">取消收藏</div>
<div class="a" style="top:338.40px;font-size:7.3px;line-height:7.3px;color:#606266;left:41.00px;width:80px;text-align:center;">2</div>
<div class="a" style="left:105.20px;top:337.60px;width:9.00px;height:9.20px;border:1px solid #efefef;border-radius:2.5px;box-sizing:border-box;"></div>
<div class="a" style="top:338.40px;font-size:7.3px;line-height:7.3px;color:#606266;left:103.75px;width:80px;text-align:center;">1000</div>
<div class="a" style="top:338.77px;font-size:7px;line-height:7px;color:#606266;letter-spacing:0.300px;left:143.55px;width:80px;text-align:center;">北京大学</div>
<div class="a" style="top:338.77px;font-size:7px;line-height:7px;color:#606266;letter-spacing:0.300px;left:180.75px;width:80px;text-align:center;">本科</div>
<div class="a" style="top:333.37px;font-size:7px;line-height:7px;color:#606266;letter-spacing:0.300px;left:218.05px;width:80px;text-align:center;">本科批</div>
<div class="a" style="top:344.77px;font-size:7px;line-height:7px;color:#606266;letter-spacing:0.300px;left:218.05px;width:80px;text-align:center;">（C段）</div>
<div class="a" style="top:338.77px;font-size:7px;line-height:7px;color:#606266;letter-spacing:0.300px;left:254.65px;width:80px;text-align:center;">历史类</div>
<div class="a" style="top:327.07px;font-size:7px;line-height:7px;color:#606266;letter-spacing:0.300px;left:311.55px;width:80px;text-align:center;">011专业组</div>
<svg class="a" style="left:341.40px;top:337.95px" width="7" height="7.5" viewBox="0 0 7 7.5"><path d="M3.5 1.2 V7.2" fill="none" stroke="#e8882a" stroke-width="0.7" opacity="0.45"/><path d="M0.6 4.1 L3.5 1.2 L6.4 4.1" fill="none" stroke="#e8882a" stroke-width="1.05"/></svg>
<svg class="a" style="left:354.50px;top:337.95px" width="7" height="7.5" viewBox="0 0 7 7.5"><path d="M3.5 0.3 V6.3" fill="none" stroke="#c0c4cc" stroke-width="0.7" opacity="0.45"/><path d="M0.6 3.4 L3.5 6.3 L6.4 3.4" fill="none" stroke="#c0c4cc" stroke-width="1.05"/></svg>
<div class="a" style="top:349.97px;font-size:7px;line-height:7px;color:#3f7ff5;letter-spacing:0.300px;left:312.05px;width:80px;text-align:center;">调整专业组顺序</div>
<div class="a" style="left:398.00px;top:297.40px;width:9.00px;height:9.20px;border:1px solid #efefef;border-radius:2.5px;box-sizing:border-box;"></div>
<div class="a" style="top:275.37px;font-size:7px;line-height:7px;color:#606266;letter-spacing:0.300px;left:411.00px;">AZ：文科试验班类[中国语言文学</div>
<div class="a" style="top:286.97px;font-size:7px;line-height:7px;color:#606266;letter-spacing:0.300px;left:411.00px;">类、考古学、历史学类、哲学类、</div>
<div class="a" style="top:298.57px;font-size:7px;line-height:7px;color:#606266;letter-spacing:0.300px;left:411.00px;">社会学类、法学、新闻传播学类、</div>
<div class="a" style="top:310.17px;font-size:7px;line-height:7px;color:#606266;letter-spacing:0.300px;left:411.00px;">经济学类、工商管理类、公共管理</div>
<div class="a" style="top:321.77px;font-size:7px;line-height:7px;color:#606266;letter-spacing:0.300px;left:411.00px;">类](元培)</div>
<svg class="a" style="left:534.40px;top:298.25px" width="7" height="7.5" viewBox="0 0 7 7.5"><path d="M3.5 1.2 V7.2" fill="none" stroke="#c0c4cc" stroke-width="0.7" opacity="0.45"/><path d="M0.6 4.1 L3.5 1.2 L6.4 4.1" fill="none" stroke="#c0c4cc" stroke-width="1.05"/></svg>
<svg class="a" style="left:548.00px;top:298.25px" width="7" height="7.5" viewBox="0 0 7 7.5"><path d="M3.5 0.3 V6.3" fill="none" stroke="#e8882a" stroke-width="0.7" opacity="0.45"/><path d="M0.6 3.4 L3.5 6.3 L6.4 3.4" fill="none" stroke="#e8882a" stroke-width="1.05"/></svg>
<div class="a" style="top:298.57px;font-size:7px;line-height:7px;color:#606266;letter-spacing:0.300px;left:540.15px;width:80px;text-align:center;">历史</div>
<div class="a" style="top:298.20px;font-size:7.3px;line-height:7.3px;color:#606266;left:580.60px;width:80px;text-align:center;">1</div>
<div class="a" style="top:298.20px;font-size:7.3px;line-height:7.3px;color:#c0c4cc;left:621.50px;width:80px;text-align:center;">-</div>
<div class="a" style="top:298.20px;font-size:7.3px;line-height:7.3px;color:#3f7ff5;left:655.40px;width:80px;text-align:center;">2024</div>
<div class="a" style="top:298.20px;font-size:7.3px;line-height:7.3px;color:#606266;left:682.50px;width:80px;text-align:center;">677</div>
<div class="a" style="top:298.20px;font-size:7.3px;line-height:7.3px;color:#606266;left:709.40px;width:80px;text-align:center;">677</div>
<div class="a" style="top:298.20px;font-size:7.3px;line-height:7.3px;color:#606266;left:736.00px;width:80px;text-align:center;">677</div>
<div class="a" style="top:298.20px;font-size:7.3px;line-height:7.3px;color:#606266;left:763.00px;width:80px;text-align:center;">1</div>
<div class="a" style="top:298.20px;font-size:7.3px;line-height:7.3px;color:#c0c4cc;left:793.50px;width:80px;text-align:center;">-</div>
<div class="a" style="top:298.20px;font-size:7.3px;line-height:7.3px;color:#c0c4cc;left:826.60px;width:80px;text-align:center;">-</div>
<div class="a" style="left:888.20px;top:295.70px;width:46.70px;height:12.60px;background:#e3ebfc;"></div>
<div class="a" style="top:298.57px;font-size:7px;line-height:7px;color:#3f6fe0;letter-spacing:0.300px;left:888.65px;width:46px;text-align:center;">冲一冲</div>
<div class="a" style="top:298.31px;font-size:8px;line-height:8px;color:#e8882a;letter-spacing:-0.140px;left:942.93px;width:60px;text-align:center;">取消收藏</div>
<div class="a" style="left:398.00px;top:343.20px;width:9.00px;height:9.20px;border:1px solid #efefef;border-radius:2.5px;box-sizing:border-box;"></div>
<div class="a" style="top:338.57px;font-size:7px;line-height:7px;color:#606266;letter-spacing:0.300px;left:411.00px;">B3：经济学类(经济学、金融学、国</div>
<div class="a" style="top:350.17px;font-size:7px;line-height:7px;color:#606266;letter-spacing:0.300px;left:411.00px;">际经济与贸易、财政学]</div>
<svg class="a" style="left:534.40px;top:344.05px" width="7" height="7.5" viewBox="0 0 7 7.5"><path d="M3.5 1.2 V7.2" fill="none" stroke="#e8882a" stroke-width="0.7" opacity="0.45"/><path d="M0.6 4.1 L3.5 1.2 L6.4 4.1" fill="none" stroke="#e8882a" stroke-width="1.05"/></svg>
<svg class="a" style="left:548.00px;top:344.05px" width="7" height="7.5" viewBox="0 0 7 7.5"><path d="M3.5 0.3 V6.3" fill="none" stroke="#e8882a" stroke-width="0.7" opacity="0.45"/><path d="M0.6 3.4 L3.5 6.3 L6.4 3.4" fill="none" stroke="#e8882a" stroke-width="1.05"/></svg>
<div class="a" style="top:344.37px;font-size:7px;line-height:7px;color:#606266;letter-spacing:0.300px;left:540.15px;width:80px;text-align:center;">历史</div>
<div class="a" style="top:344.00px;font-size:7.3px;line-height:7.3px;color:#606266;left:580.60px;width:80px;text-align:center;">1</div>
<div class="a" style="top:344.00px;font-size:7.3px;line-height:7.3px;color:#606266;left:621.50px;width:80px;text-align:center;">-</div>
<div class="a" style="top:344.00px;font-size:7.3px;line-height:7.3px;color:#3f7ff5;left:655.40px;width:80px;text-align:center;">2024</div>
<div class="a" style="top:344.00px;font-size:7.3px;line-height:7.3px;color:#606266;left:682.50px;width:80px;text-align:center;">661</div>
<div class="a" style="top:344.00px;font-size:7.3px;line-height:7.3px;color:#606266;left:709.40px;width:80px;text-align:center;">661</div>
<div class="a" style="top:344.00px;font-size:7.3px;line-height:7.3px;color:#606266;left:736.00px;width:80px;text-align:center;">661</div>
<div class="a" style="top:344.00px;font-size:7.3px;line-height:7.3px;color:#606266;left:763.00px;width:80px;text-align:center;">1</div>
<div class="a" style="top:344.00px;font-size:7.3px;line-height:7.3px;color:#c0c4cc;left:793.50px;width:80px;text-align:center;">-</div>
<div class="a" style="top:344.00px;font-size:7.3px;line-height:7.3px;color:#c0c4cc;left:826.60px;width:80px;text-align:center;">-</div>
<div class="a" style="left:888.20px;top:341.50px;width:46.70px;height:12.60px;background:#e3ebfc;"></div>
<div class="a" style="top:344.37px;font-size:7px;line-height:7px;color:#3f6fe0;letter-spacing:0.300px;left:888.65px;width:46px;text-align:center;">冲一冲</div>
<div class="a" style="top:344.11px;font-size:8px;line-height:8px;color:#e8882a;letter-spacing:-0.140px;left:942.93px;width:60px;text-align:center;">取消收藏</div>
<div class="a" style="left:398.00px;top:368.60px;width:9.00px;height:9.20px;border:1px solid #efefef;border-radius:2.5px;box-sizing:border-box;"></div>
<div class="a" style="top:369.77px;font-size:7px;line-height:7px;color:#606266;letter-spacing:0.300px;left:411.00px;">B1：法学</div>
<svg class="a" style="left:534.40px;top:369.45px" width="7" height="7.5" viewBox="0 0 7 7.5"><path d="M3.5 1.2 V7.2" fill="none" stroke="#e8882a" stroke-width="0.7" opacity="0.45"/><path d="M0.6 4.1 L3.5 1.2 L6.4 4.1" fill="none" stroke="#e8882a" stroke-width="1.05"/></svg>
<svg class="a" style="left:548.00px;top:369.45px" width="7" height="7.5" viewBox="0 0 7 7.5"><path d="M3.5 0.3 V6.3" fill="none" stroke="#e8882a" stroke-width="0.7" opacity="0.45"/><path d="M0.6 3.4 L3.5 6.3 L6.4 3.4" fill="none" stroke="#e8882a" stroke-width="1.05"/></svg>
<div class="a" style="top:369.77px;font-size:7px;line-height:7px;color:#606266;letter-spacing:0.300px;left:540.15px;width:80px;text-align:center;">历史</div>
<div class="a" style="top:369.40px;font-size:7.3px;line-height:7.3px;color:#606266;left:580.60px;width:80px;text-align:center;">1</div>
<div class="a" style="top:369.40px;font-size:7.3px;line-height:7.3px;color:#606266;left:621.50px;width:80px;text-align:center;">-</div>
<div class="a" style="top:369.40px;font-size:7.3px;line-height:7.3px;color:#3f7ff5;left:655.40px;width:80px;text-align:center;">2024</div>
<div class="a" style="top:369.40px;font-size:7.3px;line-height:7.3px;color:#606266;left:682.50px;width:80px;text-align:center;">661</div>
<div class="a" style="top:369.40px;font-size:7.3px;line-height:7.3px;color:#606266;left:709.40px;width:80px;text-align:center;">661</div>
<div class="a" style="top:369.40px;font-size:7.3px;line-height:7.3px;color:#606266;left:736.00px;width:80px;text-align:center;">661</div>
<div class="a" style="top:369.40px;font-size:7.3px;line-height:7.3px;color:#606266;left:763.00px;width:80px;text-align:center;">1</div>
<div class="a" style="top:369.40px;font-size:7.3px;line-height:7.3px;color:#c0c4cc;left:793.50px;width:80px;text-align:center;">-</div>
<div class="a" style="top:369.40px;font-size:7.3px;line-height:7.3px;color:#c0c4cc;left:826.60px;width:80px;text-align:center;">-</div>
<div class="a" style="left:888.20px;top:366.90px;width:46.70px;height:12.60px;background:#e3ebfc;"></div>
<div class="a" style="top:369.77px;font-size:7px;line-height:7px;color:#3f6fe0;letter-spacing:0.300px;left:888.65px;width:46px;text-align:center;">冲一冲</div>
<div class="a" style="top:369.51px;font-size:8px;line-height:8px;color:#e8882a;letter-spacing:-0.140px;left:942.93px;width:60px;text-align:center;">取消收藏</div>
<div class="a" style="left:398.00px;top:393.70px;width:9.00px;height:9.20px;border:1px solid #efefef;border-radius:2.5px;box-sizing:border-box;"></div>
<div class="a" style="top:389.07px;font-size:7px;line-height:7px;color:#606266;letter-spacing:0.300px;left:411.00px;">B2：历史学类(历史学(中国史)、世</div>
<div class="a" style="top:400.67px;font-size:7px;line-height:7px;color:#606266;letter-spacing:0.300px;left:411.00px;">界史、外国语言与外国历史]</div>
<svg class="a" style="left:534.40px;top:394.55px" width="7" height="7.5" viewBox="0 0 7 7.5"><path d="M3.5 1.2 V7.2" fill="none" stroke="#e8882a" stroke-width="0.7" opacity="0.45"/><path d="M0.6 4.1 L3.5 1.2 L6.4 4.1" fill="none" stroke="#e8882a" stroke-width="1.05"/></svg>
<svg class="a" style="left:548.00px;top:394.55px" width="7" height="7.5" viewBox="0 0 7 7.5"><path d="M3.5 0.3 V6.3" fill="none" stroke="#c0c4cc" stroke-width="0.7" opacity="0.45"/><path d="M0.6 3.4 L3.5 6.3 L6.4 3.4" fill="none" stroke="#c0c4cc" stroke-width="1.05"/></svg>
<div class="a" style="top:394.87px;font-size:7px;line-height:7px;color:#606266;letter-spacing:0.300px;left:540.15px;width:80px;text-align:center;">历史</div>
<div class="a" style="top:394.50px;font-size:7.3px;line-height:7.3px;color:#606266;left:580.60px;width:80px;text-align:center;">1</div>
<div class="a" style="top:394.50px;font-size:7.3px;line-height:7.3px;color:#c0c4cc;left:621.50px;width:80px;text-align:center;">-</div>
<div class="a" style="top:394.50px;font-size:7.3px;line-height:7.3px;color:#3f7ff5;left:655.40px;width:80px;text-align:center;">2024</div>
<div class="a" style="top:394.50px;font-size:7.3px;line-height:7.3px;color:#606266;left:682.50px;width:80px;text-align:center;">661</div>
<div class="a" style="top:394.50px;font-size:7.3px;line-height:7.3px;color:#606266;left:709.40px;width:80px;text-align:center;">661</div>
<div class="a" style="top:394.50px;font-size:7.3px;line-height:7.3px;color:#606266;left:736.00px;width:80px;text-align:center;">661</div>
<div class="a" style="top:394.50px;font-size:7.3px;line-height:7.3px;color:#606266;left:763.00px;width:80px;text-align:center;">1</div>
<div class="a" style="top:394.50px;font-size:7.3px;line-height:7.3px;color:#c0c4cc;left:793.50px;width:80px;text-align:center;">-</div>
<div class="a" style="top:394.50px;font-size:7.3px;line-height:7.3px;color:#c0c4cc;left:826.60px;width:80px;text-align:center;">-</div>
<div class="a" style="left:888.20px;top:392.00px;width:46.70px;height:12.60px;background:#fde4e8;"></div>
<div class="a" style="top:394.87px;font-size:7px;line-height:7px;color:#e8667a;letter-spacing:0.300px;left:888.65px;width:46px;text-align:center;">稳一稳</div>
<div class="a" style="top:394.61px;font-size:8px;line-height:8px;color:#e8882a;letter-spacing:-0.140px;left:942.93px;width:60px;text-align:center;">取消收藏</div>
</div></body></html>
